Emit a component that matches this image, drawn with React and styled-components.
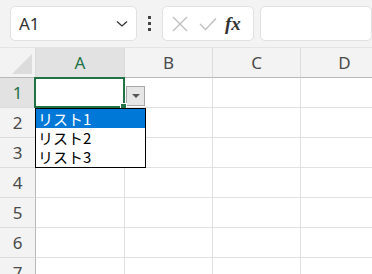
import React from "react";
import styled, { createGlobalStyle } from "styled-components";

const GlobalStyle = createGlobalStyle`
  body {
    margin: 0;
    background: #f3f3f3;
    font-family: "Noto Sans", "Noto Sans CJK JP", sans-serif;
  }
`;

const Page = styled.div`
  width: 372px;
  height: 274px;
  overflow: hidden;
  background: #ffffff;
`;

const Toolbar = styled.div`
  display: flex;
  align-items: center;
  gap: 0;
  height: 48px;
  padding: 0 0 0 10px;
  box-sizing: border-box;
  background: #f3f3f3;
  border-bottom: 1px solid #e4e4e4;
`;

const Box = styled.div`
  display: flex;
  align-items: center;
  box-sizing: border-box;
  height: 35px;
  width: ${(p) => p.w}px;
  flex: ${(p) => (p.grow ? "1 0 auto" : "0 0 auto")};
  background: #ffffff;
  border: 1px solid #e1e1e1;
  border-radius: 5px;
  margin-right: ${(p) => p.mr || 0}px;
  padding: 0 8px;
`;

const NameText = styled.span`
  flex: 1;
  font-size: 17px;
  color: #333;
  padding-left: 0;
`;

const Dots = styled.div`
  display: flex;
  flex-direction: column;
  gap: 3px;
  width: 25px;
  align-items: center;
  & span {
    width: 3px;
    height: 3px;
    background: #444;
  }
`;

const Fx = styled.span`
  font-family: "Liberation Serif", serif;
  font-style: italic;
  font-weight: bold;
  font-size: 19px;
  color: #333;
  margin-left: 8px;
`;

const Grid = styled.div`
  display: grid;
  grid-template-columns: 36px 89px 88px 88px 88px;
  grid-auto-rows: 30px;
`;

const Cell = styled.div`
  position: relative;
  box-sizing: border-box;
  border-right: 1px solid #e1e1e1;
  border-bottom: 1px solid #e1e1e1;
  background: #fff;
`;

const Head = styled.div`
  position: relative;
  display: flex;
  align-items: center;
  justify-content: center;
  box-sizing: border-box;
  background: ${(p) => (p.active ? "#e2e2e2" : "#f3f3f3")};
  color: ${(p) => (p.active ? "#217346" : "#4a4a4a")};
  font-size: 17px;
  border-right: 1px solid ${(p) => (p.row ? "#b9b9b9" : "#dcdcdc")};
  border-bottom: 1px solid ${(p) => (p.row ? "#dcdcdc" : "#b9b9b9")};
`;

const Corner = styled(Head)`
  border-right: 1px solid #dcdcdc;
  &::after {
    content: "";
    position: absolute;
    right: 3px;
    bottom: 3px;
    border-style: solid;
    border-width: 0 0 20px 20px;
    border-color: transparent transparent #dcdcdc transparent;
  }
`;

const Selected = styled(Cell)`
  &::after {
    content: "";
    position: absolute;
    left: -2px;
    top: -1px;
    right: -1px;
    bottom: -1px;
    border: 2px solid #217346;
    pointer-events: none;
  }
`;

const Handle = styled.span`
  position: absolute;
  right: -3px;
  bottom: -3px;
  width: 5px;
  height: 5px;
  background: #217346;
  border: 1px solid #fff;
  z-index: 3;
`;

const DropButton = styled.div`
  position: absolute;
  left: 90px;
  top: 8px;
  width: 19px;
  height: 20px;
  box-sizing: border-box;
  background: #e6e6e6;
  border: 1px solid #a7a7a7;
  display: flex;
  align-items: center;
  justify-content: center;
  z-index: 2;
  &::before {
    content: "";
    border-style: solid;
    border-width: 4px 4px 0 4px;
    border-color: #555 transparent transparent transparent;
  }
`;

const List = styled.div`
  position: absolute;
  left: -1px;
  top: 30px;
  width: 111px;
  box-sizing: border-box;
  background: #fff;
  border: 1px solid #000;
  z-index: 4;
  padding: 0 0 1px 0;
`;

const Item = styled.div`
  height: 19px;
  line-height: 19px;
  padding-left: 2px;
  font-family: "Noto Sans CJK JP", sans-serif;
  font-size: 15px;
  color: ${(p) => (p.active ? "#fff" : "#000")};
  background: ${(p) => (p.active ? "#0078d7" : "transparent")};
`;

const cols = ["A", "B", "C", "D"];
const rows = [1, 2, 3, 4, 5, 6, 7];

export default function App() {
  return (
    <Page>
      <GlobalStyle />
      <Toolbar>
        <Box w={127}>
          <NameText>A1</NameText>
          <svg width="12" height="8" viewBox="0 0 12 8">
            <path d="M1 1.5 L6 6 L11 1.5" fill="none" stroke="#333" strokeWidth="1.3" />
          </svg>
        </Box>
        <Dots>
          <span />
          <span />
          <span />
        </Dots>
        <Box w={92} mr={6}>
          <svg width="16" height="16" viewBox="0 0 16 16" style={{ marginLeft: 1 }}>
            <path d="M1 1 L15 15 M15 1 L1 15" stroke="#bdbdbd" strokeWidth="1.3" />
          </svg>
          <svg width="18" height="14" viewBox="0 0 18 14" style={{ marginLeft: 11 }}>
            <path d="M1 7 L6.5 12.5 L17 1.5" fill="none" stroke="#bdbdbd" strokeWidth="1.3" />
          </svg>
          <Fx>fx</Fx>
        </Box>
        <Box grow />
      </Toolbar>
      <Grid>
        <Corner />
        {cols.map((c) => (
          <Head key={c} active={c === "A"}>
            {c}
          </Head>
        ))}
        {rows.map((r) => (
          <React.Fragment key={r}>
            <Head row active={r === 1}>
              {r}
            </Head>
            {cols.map((c) =>
              r === 1 && c === "A" ? (
                <Selected key={c}>
                  <Handle />
                  <DropButton />
                  <List>
                    <Item active>リスト1</Item>
                    <Item>リスト2</Item>
                    <Item>リスト3</Item>
                  </List>
                </Selected>
              ) : (
                <Cell key={c} />
              )
            )}
          </React.Fragment>
        ))}
      </Grid>
    </Page>
  );
}
